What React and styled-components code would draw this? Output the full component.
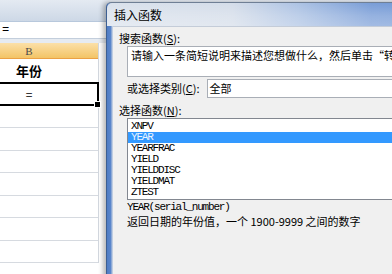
import React from 'react';
import styled, { createGlobalStyle } from 'styled-components';

const GlobalStyle = createGlobalStyle`
  html, body {
    margin: 0;
    padding: 0;
    background: #fff;
  }
  body {
    width: 392px;
    height: 274px;
    overflow: hidden;
    font-family: "Noto Sans CJK SC", "Liberation Sans", sans-serif;
  }
`;

const Screen = styled.div`
  position: relative;
  width: 392px;
  height: 274px;
  overflow: hidden;
  background: #fff;
`;

// Spreadsheet behind the dialog
const Sheet = styled.div`
  display: flex;
  flex-direction: column;
  width: 392px;
`;

const Ribbon = styled.div`
  height: 21px;
  background: linear-gradient(#e4eaf2, #cdd8e6);
  border-bottom: 1px solid #b8c8dc;
`;

const FormulaBar = styled.div`
  height: 16px;
  padding-left: 2px;
  background: #fff;
  border-bottom: 1px solid #c3cedc;
  font: 12px/16px "Liberation Mono", monospace;
  color: #000;
`;

const BarGap = styled.div`
  height: 4px;
  background: #e6ebf1;
`;

const Column = styled.div`
  display: flex;
  flex-direction: column;
  width: 138px;
  margin-left: -40px;
  border-right: 1px solid #d3d8df;
`;

const HeaderCell = styled.div`
  height: 15px;
  display: flex;
  align-items: center;
  justify-content: center;
  background: linear-gradient(#fbe0a8, #f3c466);
  border-bottom: 1px solid #eba144;
  font: 11px "Liberation Serif", serif;
  color: #4a4a4a;
`;

const Cell = styled.div`
  position: relative;
  height: ${p => p.h}px;
  display: flex;
  align-items: center;
  justify-content: center;
  border-bottom: 1px solid #d6dae0;
  font: ${p => (p.bold ? 'bold 13px' : '12px')} "Noto Sans CJK SC", sans-serif;
  color: #000;
  ${p => p.active && `
    &::after {
      content: "";
      position: absolute;
      inset: -1px -1px -1px -1px;
      border: 2px solid #000;
    }
    &::before {
      content: "";
      position: absolute;
      right: -3px;
      bottom: -3px;
      width: 5px;
      height: 5px;
      background: #000;
      border: 1px solid #fff;
      z-index: 1;
    }
  `}
`;

// Dialog
const Dialog = styled.div`
  position: absolute;
  left: 106px;
  top: 2px;
  width: 330px;
  height: 290px;
  display: flex;
  flex-direction: column;
  background: linear-gradient(to right, #4f7cc4 0, #5b87cc 4px, #bdcbe0 5px, #c9d5e6 7px);
  border-left: 1px solid #3d5f92;
  border-top: 1px solid #6f7f95;
  border-top-left-radius: 5px;
  box-shadow: -3px 0 5px rgba(0, 0, 0, 0.28);
`;

const TitleBar = styled.div`
  height: 23px;
  display: flex;
  align-items: center;
  padding-left: 7px;
  border-top-left-radius: 5px;
  background:
    linear-gradient(to bottom, rgba(255, 255, 255, 0.05) 0, rgba(255, 255, 255, 0.25) 55%, rgba(255, 255, 255, 0.35) 100%),
    linear-gradient(to right, #d8e0eb 0, #d2dbe8 38%, #a8bfe2 58%, #7298d5 80%, #6a92d3 100%);
  font: 12px "Noto Sans CJK SC", sans-serif;
  color: #000;
`;

const Client = styled.div`
  flex: 1;
  margin-left: 6px;
  display: flex;
  flex-direction: column;
  padding: 5px 0 0 6px;
  background: #f0f0f0;
  border-top: 1px solid #c4ccd8;
  font: 11px/13px "Noto Sans CJK SC", sans-serif;
  color: #000;
`;

const Label = styled.div`
  margin-left: ${p => p.indent || 0}px;
  margin-top: ${p => p.top || 0}px;
  white-space: nowrap;
`;

const SearchBox = styled.div`
  margin: 1px 0 0 8px;
  height: 25px;
  padding: 2px 3px;
  background: #fff;
  border: 1px solid #a9aeb6;
  white-space: nowrap;
  overflow: hidden;
`;

const CategoryRow = styled.div`
  display: flex;
  align-items: center;
  margin: 2px 0 0 8px;
  gap: 7px;
`;

const Select = styled.div`
  flex: 1;
  height: 17px;
  padding-left: 2px;
  display: flex;
  align-items: center;
  background: #fff;
  border: 1px solid #a9aeb6;
`;

const ListBox = styled.div`
  margin: 1px 0 0 8px;
  height: 78px;
  padding-top: 2px;
  background: #fff;
  border: 1px solid #828790;
  overflow: hidden;
  font: 11px/11px "Liberation Mono", monospace;
  letter-spacing: -1.2px;
`;

const ListItem = styled.div`
  height: 11px;
  padding-left: 3px;
  background: ${p => (p.selected ? '#3399ff' : 'transparent')};
  color: ${p => (p.selected ? '#eaf4ff' : '#000')};
`;

const Syntax = styled.div`
  margin: 1px 0 0 8px;
  font: 11px/12px "Liberation Mono", monospace;
  letter-spacing: -1.2px;
`;

const Description = styled.div`
  margin: 1px 0 0 8px;
  font: 11px/14px "Noto Sans CJK SC", sans-serif;
  white-space: nowrap;
`;

const functions = ['XNPV', 'YEAR', 'YEARFRAC', 'YIELD', 'YIELDDISC', 'YIELDMAT', 'ZTEST'];

export default function App() {
  return (
    <Screen>
      <GlobalStyle />
      <Sheet>
        <Ribbon />
        <FormulaBar>=</FormulaBar>
        <BarGap />
        <Column>
          <HeaderCell>B</HeaderCell>
          <Cell h={23} bold>年份</Cell>
          <Cell h={21.5} active>=</Cell>
          <Cell h={21.5} />
          <Cell h={21.5} />
          <Cell h={21.5} />
          <Cell h={21.5} />
          <Cell h={21.5} />
          <Cell h={21.5} />
          <Cell h={21.5} />
        </Column>
      </Sheet>

      <Dialog>
        <TitleBar>插入函数</TitleBar>
        <Client>
          <Label>搜索函数(<u>S</u>):</Label>
          <SearchBox>请输入一条简短说明来描述您想做什么，然后单击“转到”</SearchBox>
          <CategoryRow>
            <span>或选择类别(<u>C</u>):</span>
            <Select>全部</Select>
          </CategoryRow>
          <Label top={6}>选择函数(<u>N</u>):</Label>
          <ListBox>
            {functions.map(name => (
              <ListItem key={name} selected={name === 'YEAR'}>{name}</ListItem>
            ))}
          </ListBox>
          <Syntax>YEAR(serial_number)</Syntax>
          <Description>返回日期的年份值，一个 1900-9999 之间的数字</Description>
        </Client>
      </Dialog>
    </Screen>
  );
}
